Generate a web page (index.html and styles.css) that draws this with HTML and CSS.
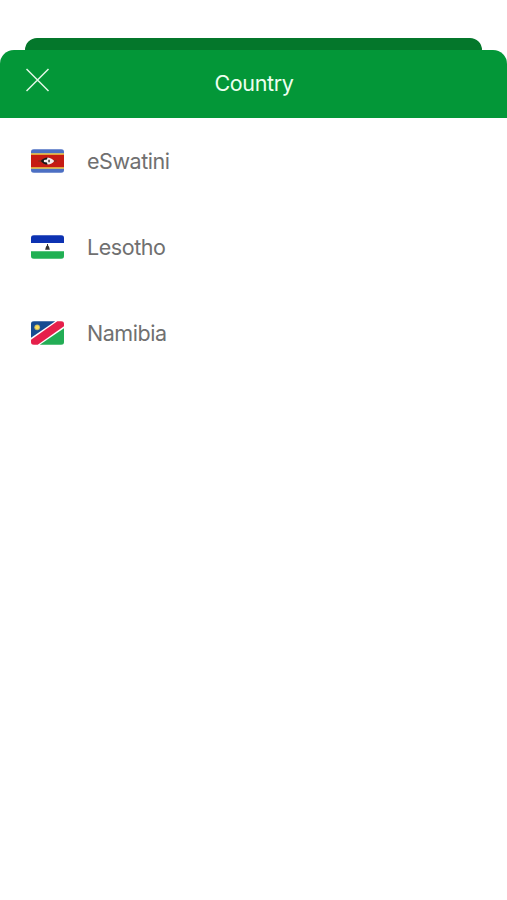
FILE: index.html
```html
<!DOCTYPE html>
<html lang="en">
<head>
<meta charset="utf-8">
<title>Country</title>
<link rel="stylesheet" href="styles.css">
</head>
<body>
<div class="backdrop"></div>
<main class="sheet">
  <header class="header">
    <button class="close" aria-label="Close">
      <svg width="24" height="24" viewBox="0 0 24 24"><path d="M.5 1L22.500 23M22.500 1L.5 23" fill="none" stroke="#e4f8e8" stroke-width="1.500"/></svg>
    </button>
    <h1 class="title">Country</h1>
  </header>
  <ul class="list">
    <li class="row">
      <svg class="flag" viewBox="0 0 32 23">
        <path fill="#4c6fc3" d="M0 0h32v23H0z"/>
        <path fill="#f2cf4a" d="M0 4h32v15H0z"/>
        <path fill="#c51b13" d="M0 5.500h32v12H0z"/>
        <path d="M7 11.500h18" stroke="#71371d" stroke-width="1"/>
        <path fill="#171717" d="M9.500 11.500Q12 8 16.500 8v7Q12 15 9.500 11.500z"/>
        <path fill="#f5eeee" d="M16 8Q20.500 8.500 22.500 11.500Q20.500 14.500 16 15L15.500 13L12.500 12.500v-2L15.500 10z"/>
        <path d="M17.500 10.300v2.400" stroke="#292222" stroke-width="1.300"/>
      </svg>
      <span class="name">eSwatini</span>
    </li>
    <li class="row">
      <svg class="flag" viewBox="0 0 32 23">
        <path fill="#fff" d="M0 0h32v23H0z"/>
        <path fill="#0d32b2" d="M0 0h32v7.500H0z"/>
        <path fill="#21b053" d="M0 15.500h32V23H0z"/>
        <path fill="#333" d="M15.500 8.500h1v1.500l1 1.200.8 3h-4.600l.8-3 1-1.200z"/>
      </svg>
      <span class="name">Lesotho</span>
    </li>
    <li class="row">
      <svg class="flag" viewBox="0 0 32 23">
        <path fill="#fff" d="M0 0h32v23H0z"/>
        <path fill="#174b91" d="M0 0h23.500L0 16z"/>
        <path fill="#23ad55" d="M32 7v16H8.500z"/>
        <path fill="#e5204b" d="M25.500 0H32v5L6.500 23H0v-5z"/>
        <circle cx="6" cy="6" r="2.800" fill="#b9b36f"/>
        <circle cx="6" cy="6" r="1.900" fill="#ffe05a"/>
      </svg>
      <span class="name">Namibia</span>
    </li>
  </ul>
</main>
</body>
</html>
```

FILE: styles.css
```css
* { box-sizing: border-box; }
body {
  margin: 0;
  padding-top: 38px;
  min-height: 900px;
  background: #fff;
  font-family: Inter, "Liberation Sans", sans-serif;
}
.backdrop {
  height: 12px;
  margin: 0 25px;
  border-radius: 12px 12px 0 0;
  background: #04772b;
}
.header {
  display: grid;
  grid-template-columns: 76px 1fr 76px;
  height: 68px;
  background: #039738;
  border-radius: 14px 14px 0 0;
}
.close {
  padding: 18px 0 0 26px;
  border: 0;
  background: none;
  display: flex;
  align-items: flex-start;
}
.close svg { flex: none; }
.title {
  margin: 0;
  padding-left: 1px;
  color: #edfff0;
  text-align: center;
  font-size: 21.5px;
  font-weight: 400;
  line-height: 67px;
  letter-spacing: -0.35px;
}
.list {
  margin: 0;
  padding: 0;
  list-style: none;
}
.row {
  display: flex;
  align-items: center;
  gap: 23px;
  height: 86px;
  padding-left: 31px;
}
.flag {
  width: 33px;
  height: 24px;
  border-radius: 3px;
}
.name {
  color: #707070;
  font-size: 21.5px;
  line-height: 26px;
  letter-spacing: -0.45px;
}
```
